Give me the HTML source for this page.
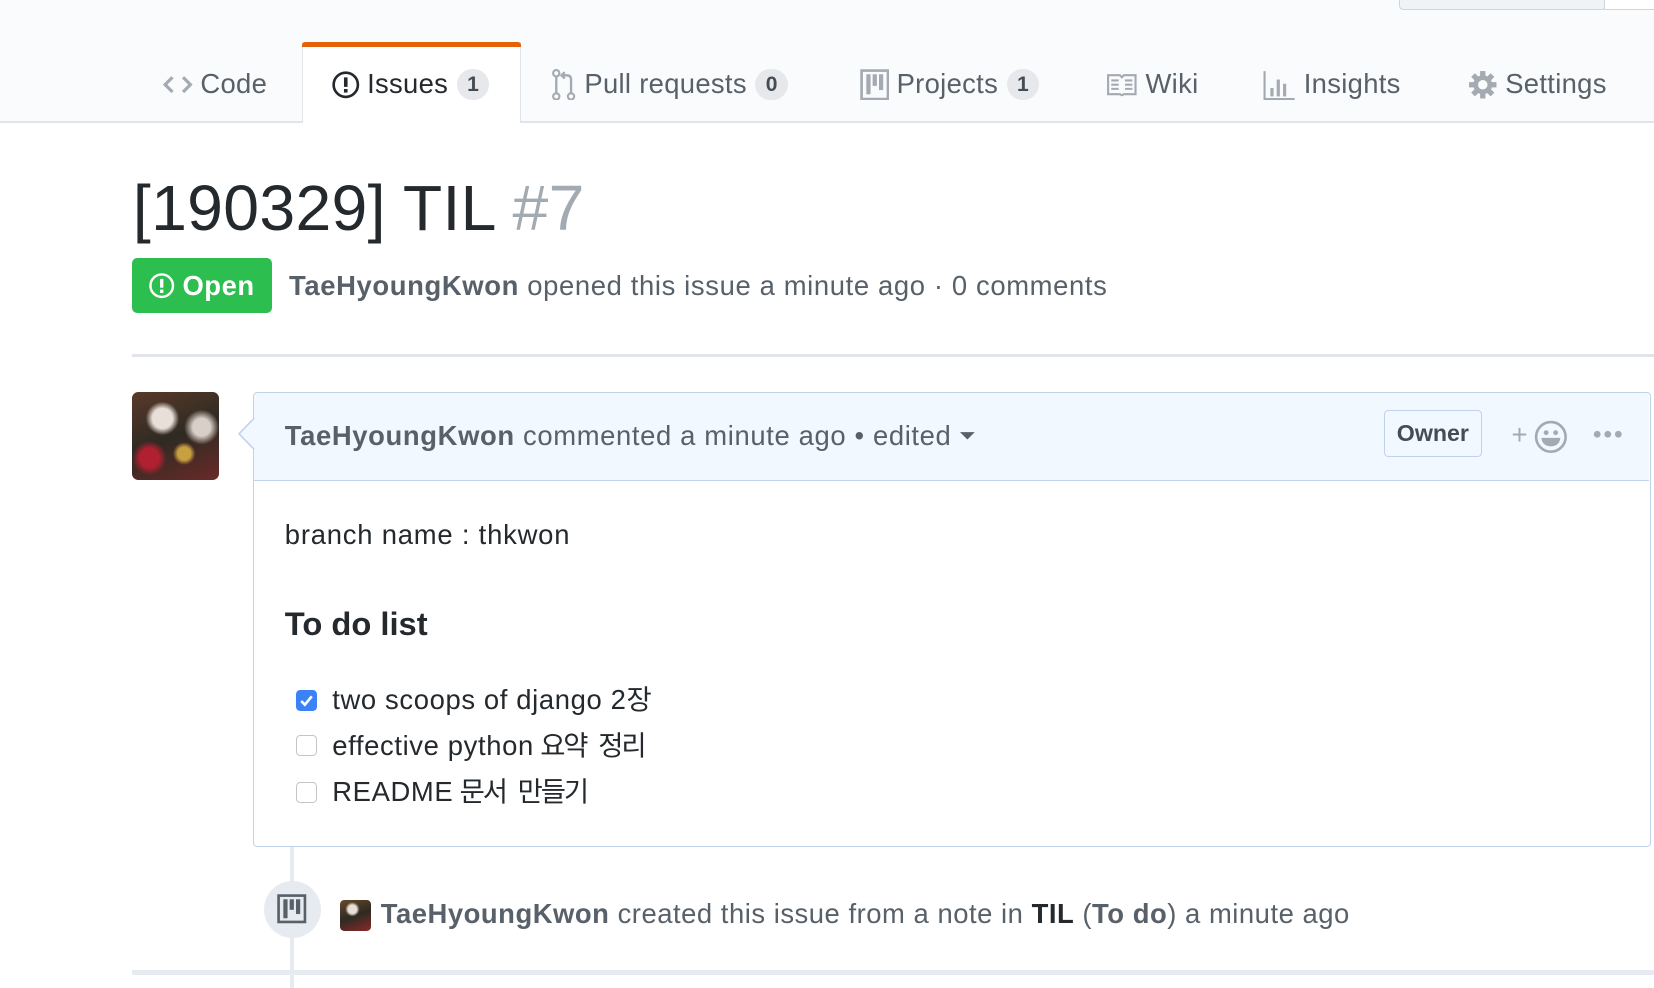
<!DOCTYPE html>
<html><head><meta charset="utf-8"><style>
html{zoom:1.0548}
body{margin:0;width:1568px;height:937px;overflow:hidden;background:#fff;font-family:"Liberation Sans","Noto Sans CJK KR",sans-serif;color:#24292e;position:relative}
.a{position:absolute;white-space:nowrap}
.c{display:flex;align-items:center;height:40px;line-height:40px}
.tab{font-size:26px;color:#586069;letter-spacing:0.3px}
.cnt{display:inline-block;background:#e6e8eb;color:#444d56;font-size:20px;font-weight:bold;border-radius:15px;width:31px;height:30px;line-height:30px;text-align:center;margin-left:8px;letter-spacing:0}
.g{color:#586069}
.b{font-weight:bold}
.ls{letter-spacing:0.6px}
.k{letter-spacing:-2px;word-spacing:6px;margin-left:6px}
.cb{position:absolute;left:281px;width:20px;height:20px;border:1px solid #c4c4c4;border-radius:4px;background:#fff;box-sizing:border-box}
</style></head><body>
<div class="a" style="left:0;top:0;width:1568px;height:115px;background:#fafbfc;border-bottom:2px solid #e1e4e8"></div>
<div class="a" style="left:1326px;top:-6px;width:195px;height:14px;border:1.5px solid #d1d5da;border-radius:4px;background:#eff3f6"></div>
<div class="a" style="left:1521px;top:-6px;width:60px;height:14px;border:1.5px solid #d1d5da;background:#fff"></div>
<div class="a" style="left:286px;top:40px;width:206px;height:77px;background:#fff;border:1px solid #e1e4e8;border-top:none;border-bottom:none"></div>
<div class="a" style="left:286px;top:40px;width:208px;height:5px;background:#e36209;border-radius:3px 3px 0 0"></div>

<div class="a c tab" style="left:155px;top:60px"><svg width="28" height="24" viewBox="0 0 28 24"><path d="M9 5 L2 12 L9 19 M19 5 L26 12 L19 19" fill="none" stroke="#a3aab1" stroke-width="3"/></svg><span style="margin-left:7px">Code</span></div>
<div class="a c tab" style="left:314px;top:60px;color:#24292e"><svg width="28" height="28" viewBox="0 0 28 28"><circle cx="14" cy="14" r="11.5" fill="none" stroke="#24292e" stroke-width="2.5"/><rect x="12.3" y="7" width="3.4" height="9" fill="#24292e"/><rect x="12.3" y="18" width="3.4" height="3.4" fill="#24292e"/></svg><span style="margin-left:6px">Issues</span><span class="cnt">1</span></div>
<div class="a c tab" style="left:522px;top:60px"><svg width="26" height="30" viewBox="0 0 26 30"><circle cx="5" cy="4" r="3" fill="none" stroke="#a3aab1" stroke-width="2"/><circle cx="5" cy="26" r="3" fill="none" stroke="#a3aab1" stroke-width="2"/><circle cx="19" cy="26" r="3" fill="none" stroke="#a3aab1" stroke-width="2"/><path d="M5 7 V23 M19 23 V10 Q19 6 15 6 H11 M13 3 L10 6 L13 9" fill="none" stroke="#a3aab1" stroke-width="2.2"/></svg><span style="margin-left:6px">Pull requests</span><span class="cnt">0</span></div>
<div class="a c tab" style="left:815px;top:60px"><svg width="28" height="30" viewBox="0 0 28 30"><rect x="1.5" y="1.5" width="25" height="27" fill="none" stroke="#a3aab1" stroke-width="2.5"/><rect x="6" y="5" width="4" height="19" fill="#a3aab1"/><rect x="12" y="5" width="4" height="11" fill="#a3aab1"/><rect x="18" y="5" width="4" height="15" fill="#a3aab1"/></svg><span style="margin-left:7px">Projects</span><span class="cnt">1</span></div>
<div class="a c tab" style="left:1049px;top:60px"><svg width="30" height="24" viewBox="0 0 30 24"><path d="M2 3 H13 L15 5 L17 3 H28 V21 H17 L15 22 L13 21 H2 Z" fill="none" stroke="#a3aab1" stroke-width="2"/><path d="M5 8 H12 M5 12 H12 M5 16 H12 M18 8 H25 M18 12 H25 M18 16 H25" stroke="#a3aab1" stroke-width="2"/></svg><span style="margin-left:7px">Wiki</span></div>
<div class="a c tab" style="left:1197px;top:60px"><svg width="32" height="30" viewBox="0 0 32 30"><path d="M1.5 2 V28.5 H30" fill="none" stroke="#a3aab1" stroke-width="2"/><rect x="7" y="18" width="3" height="8" fill="#a3aab1"/><rect x="13" y="10" width="3" height="16" fill="#a3aab1"/><rect x="19" y="14" width="3" height="12" fill="#a3aab1"/></svg><span style="margin-left:7px">Insights</span></div>
<div class="a c tab" style="left:1392px;top:60px"><svg width="28" height="28" viewBox="0 0 28 28"><g fill="#a3aab1"><circle cx="14" cy="14" r="9"/><rect x="11.5" y="1" width="5" height="26"/><rect x="1" y="11.5" width="26" height="5"/><rect x="11.5" y="1" width="5" height="26" transform="rotate(45 14 14)"/><rect x="11.5" y="1" width="5" height="26" transform="rotate(-45 14 14)"/></g><circle cx="14" cy="14" r="4.5" fill="#fafbfc"/></svg><span style="margin-left:7px">Settings</span></div>

<div class="a" style="left:126px;top:160px;font-size:61px;line-height:74px;letter-spacing:0.3px">[190329] TIL <span style="color:#a3aab1">#7</span></div>

<div class="a" style="left:125px;top:245px;width:133px;height:52px;background:#2cbe4e;border-radius:5px;color:#fff;font-size:26px;font-weight:bold;display:flex;align-items:center"><svg style="margin-left:15px" width="26" height="26" viewBox="0 0 28 28"><circle cx="14" cy="14" r="11.5" fill="none" stroke="#fff" stroke-width="2.5"/><rect x="12.3" y="7" width="3.4" height="9" fill="#fff"/><rect x="12.3" y="18" width="3.4" height="3.4" fill="#fff"/></svg><span style="margin-left:7px;letter-spacing:0.5px">Open</span></div>
<div class="a c g ls" style="left:274px;top:251px;font-size:26px"><span class="b">TaeHyoungKwon</span>&nbsp;opened this issue a minute ago · 0 comments</div>
<div class="a" style="left:125px;top:336px;width:1450px;height:2px;background:#e1e4e8"></div>

<div class="a" style="left:125px;top:372px;width:83px;height:83px;border-radius:6px;overflow:hidden;background:radial-gradient(circle at 35% 30%,#e8e0d8 0 12%,transparent 20%),radial-gradient(circle at 60% 70%,#c8a040 0 8%,transparent 14%),radial-gradient(circle at 20% 75%,#b02030 0 10%,transparent 18%),radial-gradient(circle at 80% 40%,#d8d0c8 0 10%,transparent 20%),linear-gradient(160deg,#5a3a2a,#2e2a22 50%,#6a2a2a)"></div>

<div class="a" style="left:240px;top:372px;width:1323px;height:429px;border:1.5px solid #c0d3eb;border-radius:4px;background:#fff"></div>
<div class="a" style="left:241px;top:373px;width:1322px;height:82px;background:#f1f8ff;border-bottom:1.5px solid #c0d3eb;border-radius:4px 4px 0 0"></div>
<svg class="a" style="left:226px;top:396px" width="16" height="30" viewBox="0 0 16 30"><path d="M15.5 0 L1 15 L15.5 30" fill="#f1f8ff" stroke="#c0d3eb" stroke-width="1.5"/></svg>
<div class="a c g ls" style="left:270px;top:393px;font-size:26px"><span class="b">TaeHyoungKwon</span>&nbsp;commented a minute ago • edited<svg style="margin-left:8px" width="14" height="10" viewBox="0 0 14 10"><path d="M0 2 H14 L7 9 Z" fill="#586069"/></svg></div>
<div class="a" style="left:1312px;top:389px;width:91px;height:42px;border:1.5px solid #c0d3eb;border-radius:4px;font-size:22px;font-weight:bold;color:#444d56;text-align:center;line-height:42px">Owner</div>
<div class="a" style="left:1433px;top:397px;font-size:26px;color:#a3aab1;line-height:30px">+</div>
<svg class="a" style="left:1454px;top:398px" width="32" height="32" viewBox="0 0 32 32"><circle cx="16" cy="16" r="14" fill="none" stroke="#a3aab1" stroke-width="2.5"/><circle cx="11.5" cy="12" r="2.3" fill="#a3aab1"/><circle cx="20.5" cy="12" r="2.3" fill="#a3aab1"/><path d="M7 17 H25 Q24 25 16 25 Q8 25 7 17Z" fill="#a3aab1"/></svg>
<svg class="a" style="left:1510px;top:408px" width="28" height="8"><circle cx="4" cy="4" r="3.2" fill="#a3aab1"/><circle cx="14" cy="4" r="3.2" fill="#a3aab1"/><circle cx="24" cy="4" r="3.2" fill="#a3aab1"/></svg>

<div class="a c" style="left:270px;top:487px;font-size:26px;letter-spacing:0.75px">branch name : thkwon</div>
<div class="a c b" style="left:270px;top:572px;font-size:31px">To do list</div>
<div class="cb" style="top:654px;background:#3b82f6;border-color:#3b82f6"><svg width="18" height="18" viewBox="0 0 18 18"><path d="M4 9.5 L7.5 13 L14 5" fill="none" stroke="#fff" stroke-width="2.5"/></svg></div>
<div class="cb" style="top:697px"></div>
<div class="cb" style="top:741px"></div>
<div class="a c ls" style="left:315px;top:644px;font-size:26px">two scoops of django 2<span style="letter-spacing:-2px">장</span></div>
<div class="a c ls" style="left:315px;top:687px;font-size:26px">effective python<span class="k">요약 정리</span></div>
<div class="a c ls" style="left:315px;top:731px;font-size:26px">README<span class="k">문서 만들기</span></div>

<div class="a" style="left:275px;top:803px;width:4px;height:134px;background:#e6ebf1"></div>
<div class="a" style="left:250px;top:835px;width:54px;height:54px;border-radius:50%;background:#e6ebf1"></div>
<svg class="a" style="left:263px;top:848px" width="28" height="28" viewBox="0 0 28 28"><rect x="1.5" y="1.5" width="25" height="25" fill="none" stroke="#586069" stroke-width="2.5"/><rect x="6" y="5" width="4" height="18" fill="#586069"/><rect x="12" y="5" width="4" height="10" fill="#586069"/><rect x="18" y="5" width="4" height="14" fill="#586069"/></svg>
<div class="a" style="left:322px;top:853px;width:30px;height:30px;border-radius:4px;background:radial-gradient(circle at 40% 30%,#e8e0d8 0 15%,transparent 25%),linear-gradient(160deg,#6a4a2a,#2e2a22 50%,#8a2a2a)"></div>
<div class="a c g" style="left:361px;top:847px;font-size:26px;letter-spacing:0.5px"><span class="b">TaeHyoungKwon</span>&nbsp;created this issue from a note in&nbsp;<span class="b" style="color:#24292e">TIL</span>&nbsp;(<span class="b">To do</span>) a minute ago</div>
<div class="a" style="left:125px;top:920px;width:1450px;height:4px;background:#e6ebf1"></div>
</body></html>
